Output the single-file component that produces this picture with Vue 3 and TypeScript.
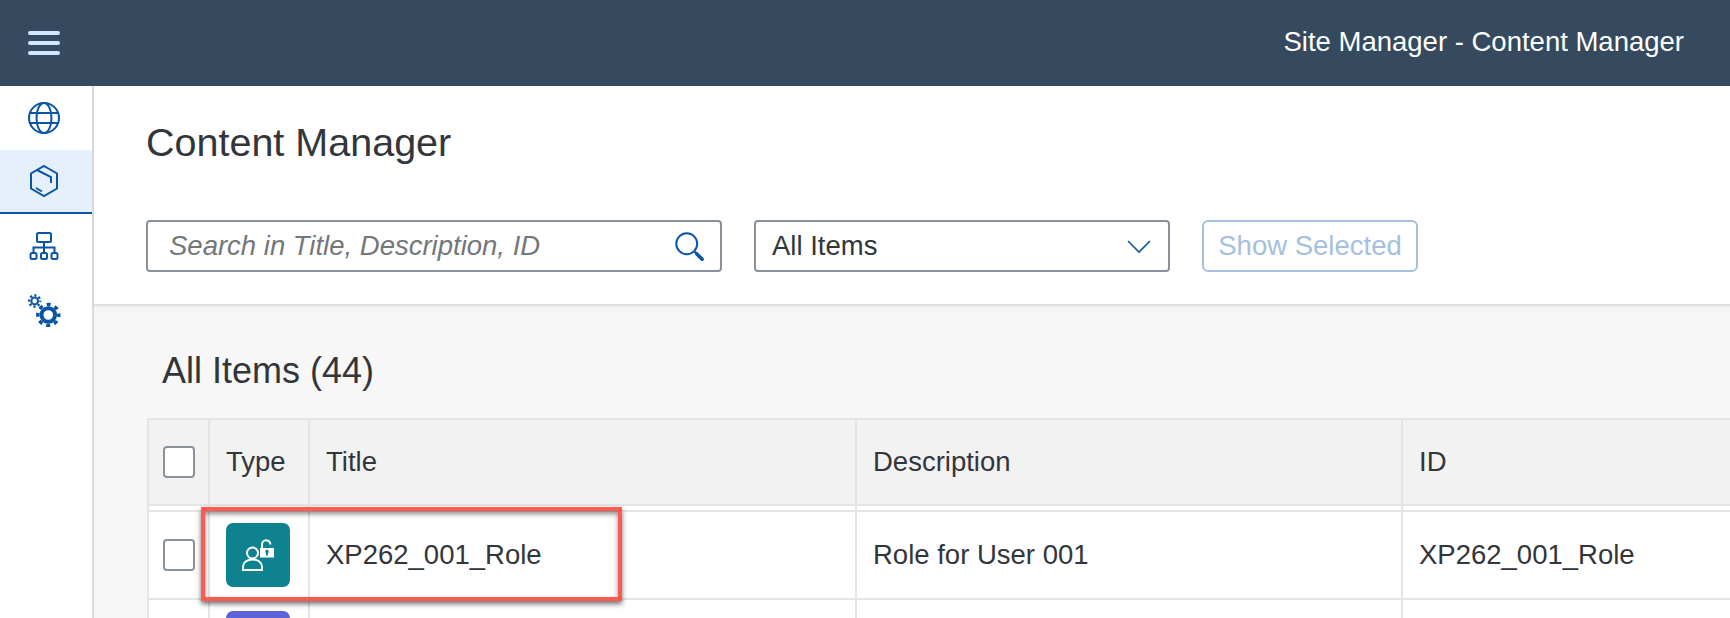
<script setup lang="ts">
const columns: string[] = ['Type', 'Title', 'Description', 'ID']
</script>

<template>
  <div class="app">
    <header class="shell">
      <button class="burger" aria-label="Menu"><span></span><span></span><span></span></button>
      <div class="shell-title">Site Manager - Content Manager</div>
    </header>
    <div class="body">
      <nav class="side">
        <div class="nav-item">
          <svg width="34" height="34" viewBox="0 0 34 34" fill="none" stroke="#0a54a5" stroke-width="2">
            <circle cx="17" cy="17" r="15" />
            <ellipse cx="17" cy="17" rx="7.500" ry="15" />
            <path d="M2.500 12h29M2.500 22h29" />
          </svg>
        </div>
        <div class="nav-item active">
          <svg width="30" height="34" viewBox="0 0 30 34" fill="none" stroke="#0a54a5" stroke-width="2">
            <path d="M15 2l13 7.500v15L15 32 2 24.500v-15z" />
            <path d="M8 6l14 7v6M7 24l6 3.500" />
          </svg>
        </div>
        <div class="nav-item">
          <svg width="30" height="30" viewBox="0 0 30 30" fill="none" stroke="#0a54a5" stroke-width="2">
            <rect x="8" y="2" width="14" height="9" rx="1.500" />
            <path d="M15 11v11M4.500 22v-5.500h21V22" />
            <rect x="1.500" y="22" width="6" height="6" rx="1.500" />
            <rect x="12" y="22" width="6" height="6" rx="1.500" />
            <rect x="22.500" y="22" width="6" height="6" rx="1.500" />
          </svg>
        </div>
        <div class="nav-item">
          <svg width="34" height="34" viewBox="0 0 34 34" fill="none" stroke="#0a54a5">
            <circle cx="7.700" cy="8" r="3.400" stroke-width="2" />
            <circle cx="7.700" cy="8" r="5.600" stroke-width="2.400" stroke-dasharray="2.200 2.200" stroke-dashoffset="1.100" />
            <circle cx="21.300" cy="22" r="6.800" stroke-width="4" />
            <circle cx="21.300" cy="22" r="10.500" stroke-width="3.400" stroke-dasharray="4 4.250" stroke-dashoffset="2" />
          </svg>
        </div>
      </nav>
      <main class="main">
        <section class="page-head">
          <h1>Content Manager</h1>
          <div class="filters">
            <div class="field search">
              <span class="placeholder">Search in Title, Description, ID</span>
              <svg width="33" height="33" viewBox="0 0 30 30" fill="none" stroke="#0a54a5">
                <circle cx="12.500" cy="12.500" r="9.500" stroke-width="1.800" />
                <path d="M19.500 19.500l2 2" stroke-width="1.800" />
                <path d="M21.500 21.500l5 5" stroke-width="3.200" stroke-linecap="round" />
              </svg>
            </div>
            <div class="field select">
              <span>All Items</span>
              <svg width="26" height="16" viewBox="0 0 26 16" fill="none" stroke="#0a54a5" stroke-width="1.600">
                <path d="M2 3l11 11L24 3" />
              </svg>
            </div>
            <button class="ghost">Show Selected</button>
          </div>
        </section>
        <section class="content">
          <h2>All Items (44)</h2>
          <div class="table">
            <div class="row head">
              <div class="cell check"><span class="box"></span></div>
              <div v-for="c in columns" :key="c" class="cell">{{ c }}</div>
            </div>
            <div class="spacer">
              <div class="cell check"></div>
              <div v-for="c in columns" :key="c" class="cell"></div>
            </div>
            <div class="row item">
              <div class="cell check"><span class="box"></span></div>
              <div class="cell type">
                <span class="tile teal">
                  <svg width="34" height="32" viewBox="0 0 34 32" fill="none" stroke="#fff" stroke-width="2">
                    <circle cx="11.500" cy="14" r="5.500" />
                    <path d="M2 31v-3.500c0-4 4-7 9.500-7s9.500 3 9.500 7V31z" />
                    <path d="M21 9V5.500a4.200 4.200 0 0 1 8.400 0" />
                    <path fill="#fff" stroke="none" fill-rule="evenodd" d="M19 9h14v9.500H19zM26 10.800a1.800 1.800 0 0 0-1 3.300v2.400h2v-2.400a1.800 1.800 0 0 0-1-3.300z" />
                  </svg>
                </span>
              </div>
              <div class="cell">XP262_001_Role</div>
              <div class="cell">Role for User 001</div>
              <div class="cell">XP262_001_Role</div>
            </div>
            <div class="row item">
              <div class="cell check"></div>
              <div class="cell type"><span class="tile purple"></span></div>
              <div class="cell"></div>
              <div class="cell"></div>
              <div class="cell"></div>
            </div>
            <div class="callout"></div>
          </div>
        </section>
      </main>
    </div>
  </div>
</template>

<style>
html, body { margin: 0; padding: 0; background: #fff; overflow: hidden; }
</style>

<style scoped>
.app {
  width: 1730px;
  height: 618px;
  overflow: hidden;
  display: flex;
  flex-direction: column;
  font-family: "Liberation Sans", Arial, sans-serif;
  color: #32363a;
}
.shell {
  height: 86px;
  flex: none;
  background: #354a5f;
  display: flex;
  align-items: center;
  justify-content: space-between;
  padding: 0 46px 0 28px;
}
.burger {
  width: 32px;
  padding: 0;
  border: 0;
  background: none;
  display: flex;
  flex-direction: column;
  gap: 6px;
}
.burger span { display: block; height: 4px; border-radius: 2px; background: #d1e8ff; }
.shell-title { color: #fff; font-size: 27.500px; margin-top: -2px; }
.body { flex: 1; display: flex; min-height: 0; }
.side {
  width: 94px;
  flex: none;
  box-sizing: border-box;
  border-right: 2px solid #d9d9d9;
  display: flex;
  flex-direction: column;
}
.nav-item {
  height: 64px;
  flex: none;
  box-sizing: border-box;
  padding-right: 4px;
  display: flex;
  align-items: center;
  justify-content: center;
}
.nav-item.active {
  background: #e5f0fa;
  border-bottom: 2px solid #0a54a5;
}
.main { flex: 1; min-width: 0; display: flex; flex-direction: column; }
.page-head {
  height: 220px;
  flex: none;
  box-sizing: border-box;
  border-bottom: 2px solid #dedede;
  padding: 30px 0 0 52px;
}
h1 { margin: 0; font-size: 39.500px; line-height: 52px; font-weight: 400; }
.filters { display: flex; align-items: stretch; margin-top: 52px; height: 52px; }
.field {
  box-sizing: border-box;
  display: flex;
  align-items: center;
  justify-content: space-between;
  border: 2px solid #89919a;
  border-radius: 4px;
  background: #fff;
  font-size: 27.500px;
}
.search { width: 576px; padding: 0 14px 0 21px; }
.select { width: 416px; margin-left: 32px; padding: 0 16px 0 16px; }
.placeholder { font-style: italic; color: #74777a; }
.ghost {
  margin-left: 32px;
  width: 216px;
  box-sizing: border-box;
  border: 2px solid #a5c0df;
  border-radius: 6px;
  background: #fff;
  color: #a5c0df;
  font: inherit;
  font-size: 27.500px;
  padding: 0;
}
.content {
  flex: 1;
  min-height: 0;
  background: linear-gradient(#f0f0f0, #f7f7f7 8px);
  padding-left: 53px;
}
h2 { margin: 0; padding: 43px 0 0 15px; font-size: 36px; line-height: 44px; font-weight: 400; height: 69px; box-sizing: content-box; }
.table { position: relative; border-top: 2px solid #e5e5e5; border-left: 2px solid #e5e5e5; }
.row, .spacer {
  display: grid;
  grid-template-columns: 61px 100px 547px 546px 1fr;
}
.cell {
  box-sizing: border-box;
  border-right: 2px solid #e5e5e5;
  display: flex;
  align-items: center;
  padding-left: 16px;
  font-size: 27.500px;
  min-width: 0;
}
.cell:last-child { border-right: 0; }
.check { padding: 0; justify-content: center; }
.head { height: 86px; background: #f2f2f2; border-bottom: 2px solid #e5e5e5; box-sizing: border-box; }
.spacer { height: 6px; background: #fff; box-sizing: border-box; border-bottom: 2px solid #e5e5e5; }
.item { height: 88px; background: #fff; border-bottom: 2px solid #e5e5e5; box-sizing: border-box; }
.box {
  width: 32px;
  height: 32px;
  box-sizing: border-box;
  border: 2px solid #89919a;
  border-radius: 4px;
  background: #fff;
}
.tile {
  width: 64px;
  height: 64px;
  flex: none;
  border-radius: 7px;
  display: flex;
  align-items: center;
  justify-content: center;
}
.teal { background: #0f828f; }
.purple { background: #5d62d8; }
.callout {
  position: absolute;
  left: 52px;
  top: 87px;
  width: 421px;
  height: 94px;
  box-sizing: border-box;
  border: 4px solid #ff5a4f;
  box-shadow: 0 3px 5px rgba(0, 0, 0, .55), inset 0 3px 5px rgba(0, 0, 0, .45);
}
</style>
